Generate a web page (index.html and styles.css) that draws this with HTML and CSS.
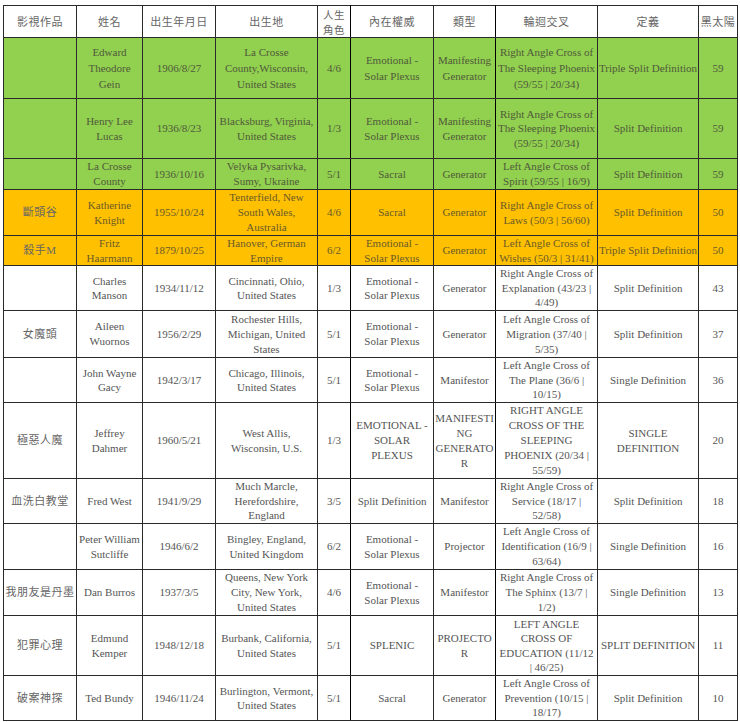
FILE: index.html
```html
<!DOCTYPE html>
<html lang="zh-Hant">
<head>
<meta charset="utf-8">
<title>連續殺人犯人類圖</title>
<link rel="stylesheet" href="styles.css">
</head>
<body>
<table class="grid">
  <colgroup>
    <col class="c1"><col class="c2"><col class="c3"><col class="c4"><col class="c5">
    <col class="c6"><col class="c7"><col class="c8"><col class="c9"><col class="c10">
  </colgroup>
  <thead>
    <tr class="h32">
      <th>影視作品</th><th>姓名</th><th>出生年月日</th><th>出生地</th><th class="two">人生<br>角色</th>
      <th>內在權威</th><th>類型</th><th>輪迴交叉</th><th>定義</th><th>黑太陽</th>
    </tr>
  </thead>
  <tbody>
    <tr class="green h61">
      <td></td><td>Edward<br>Theodore<br>Gein</td><td>1906/8/27</td><td>La Crosse<br>County,Wisconsin,<br>United States</td><td>4/6</td>
      <td>Emotional -<br>Solar Plexus</td><td>Manifesting<br>Generator</td><td>Right Angle Cross of<br>The Sleeping Phoenix<br>(59/55 | 20/34)</td><td>Triple Split Definition</td><td>59</td>
    </tr>
    <tr class="green h60">
      <td></td><td>Henry Lee<br>Lucas</td><td>1936/8/23</td><td>Blacksburg, Virginia,<br>United States</td><td>1/3</td>
      <td>Emotional -<br>Solar Plexus</td><td>Manifesting<br>Generator</td><td>Right Angle Cross of<br>The Sleeping Phoenix<br>(59/55 | 20/34)</td><td>Split Definition</td><td>59</td>
    </tr>
    <tr class="green h31">
      <td></td><td>La Crosse<br>County</td><td>1936/10/16</td><td>Velyka Pysarivka,<br>Sumy, Ukraine</td><td>5/1</td>
      <td>Sacral</td><td>Generator</td><td>Left Angle Cross of<br>Spirit (59/55 | 16/9)</td><td>Split Definition</td><td>59</td>
    </tr>
    <tr class="orange h46">
      <td class="cjk">斷頭谷</td><td>Katherine<br>Knight</td><td>1955/10/24</td><td>Tenterfield, New<br>South Wales,<br>Australia</td><td>4/6</td>
      <td>Sacral</td><td>Generator</td><td>Right Angle Cross of<br>Laws (50/3 | 56/60)</td><td>Split Definition</td><td>50</td>
    </tr>
    <tr class="orange h30">
      <td class="cjk">殺手M</td><td>Fritz<br>Haarmann</td><td>1879/10/25</td><td>Hanover, German<br>Empire</td><td>6/2</td>
      <td>Emotional -<br>Solar Plexus</td><td>Generator</td><td>Left Angle Cross of<br>Wishes (50/3 | 31/41)</td><td>Triple Split Definition</td><td>50</td>
    </tr>
    <tr class="h45">
      <td></td><td>Charles<br>Manson</td><td>1934/11/12</td><td>Cincinnati, Ohio,<br>United States</td><td>1/3</td>
      <td>Emotional -<br>Solar Plexus</td><td>Generator</td><td>Right Angle Cross of<br>Explanation (43/23 |<br>4/49)</td><td>Split Definition</td><td>43</td>
    </tr>
    <tr class="h47">
      <td class="cjk">女魔頭</td><td>Aileen<br>Wuornos</td><td>1956/2/29</td><td>Rochester Hills,<br>Michigan, United<br>States</td><td>5/1</td>
      <td>Emotional -<br>Solar Plexus</td><td>Generator</td><td>Left Angle Cross of<br>Migration (37/40 |<br>5/35)</td><td>Split Definition</td><td>37</td>
    </tr>
    <tr class="h45">
      <td></td><td>John Wayne<br>Gacy</td><td>1942/3/17</td><td>Chicago, Illinois,<br>United States</td><td>5/1</td>
      <td>Emotional -<br>Solar Plexus</td><td>Manifestor</td><td>Left Angle Cross of<br>The Plane (36/6 |<br>10/15)</td><td>Single Definition</td><td>36</td>
    </tr>
    <tr class="h76">
      <td class="cjk">極惡人魔</td><td>Jeffrey<br>Dahmer</td><td>1960/5/21</td><td>West Allis,<br>Wisconsin, U.S.</td><td>1/3</td>
      <td>EMOTIONAL -<br>SOLAR<br>PLEXUS</td><td>MANIFESTI<br>NG<br>GENERATO<br>R</td><td>RIGHT ANGLE<br>CROSS OF THE<br>SLEEPING<br>PHOENIX (20/34 |<br>55/59)</td><td>SINGLE<br>DEFINITION</td><td>20</td>
    </tr>
    <tr class="h45">
      <td class="cjk">血洗白教堂</td><td>Fred West</td><td>1941/9/29</td><td>Much Marcle,<br>Herefordshire,<br>England</td><td>3/5</td>
      <td>Split Definition</td><td>Manifestor</td><td>Right Angle Cross of<br>Service (18/17 |<br>52/58)</td><td>Split Definition</td><td>18</td>
    </tr>
    <tr class="h46">
      <td></td><td>Peter William<br>Sutcliffe</td><td>1946/6/2</td><td>Bingley, England,<br>United Kingdom</td><td>6/2</td>
      <td>Emotional -<br>Solar Plexus</td><td>Projector</td><td>Left Angle Cross of<br>Identification (16/9 |<br>63/64)</td><td>Single Definition</td><td>16</td>
    </tr>
    <tr class="h46">
      <td class="cjk">我朋友是丹墨</td><td>Dan Burros</td><td>1937/3/5</td><td>Queens, New York<br>City, New York,<br>United States</td><td>4/6</td>
      <td>Emotional -<br>Solar Plexus</td><td>Manifestor</td><td>Right Angle Cross of<br>The Sphinx (13/7 |<br>1/2)</td><td>Single Definition</td><td>13</td>
    </tr>
    <tr class="h60">
      <td class="cjk">犯罪心理</td><td>Edmund<br>Kemper</td><td>1948/12/18</td><td>Burbank, California,<br>United States</td><td>5/1</td>
      <td>SPLENIC</td><td>PROJECTO<br>R</td><td>LEFT ANGLE<br>CROSS OF<br>EDUCATION (11/12<br>| 46/25)</td><td>SPLIT DEFINITION</td><td>11</td>
    </tr>
    <tr class="h45">
      <td class="cjk">破案神探</td><td>Ted Bundy</td><td>1946/11/24</td><td>Burlington, Vermont,<br>United States</td><td>5/1</td>
      <td>Sacral</td><td>Generator</td><td>Left Angle Cross of<br>Prevention (10/15 |<br>18/17)</td><td>Split Definition</td><td>10</td>
    </tr>
  </tbody>
</table>
</body>
</html>
```

FILE: styles.css
```css
html, body {
  margin: 0;
  background: #ffffff;
}

body {
  padding: 5px 3px 0 3px;
  font-family: "Liberation Serif", "Times New Roman", "Noto Sans CJK TC", serif;
  font-size: 11px;
  line-height: 15px;
  color: #555555;
}

.grid {
  border-collapse: collapse;
  table-layout: fixed;
  width: 734px;
}

.c1 { width: 73px; }
.c2 { width: 66px; }
.c3 { width: 73px; }
.c4 { width: 102px; }
.c5 { width: 33px; }
.c6 { width: 83px; }
.c7 { width: 62px; }
.c8 { width: 102px; }
.c9 { width: 101px; }
.c10 { width: 39px; }

.grid th,
.grid td {
  border: 1px solid #2a2a2a;
  padding: 0;
  text-align: center;
  vertical-align: middle;
  white-space: nowrap;
  overflow: hidden;
}

.grid th {
  font-family: "Noto Sans CJK TC", sans-serif;
  font-weight: 400;
  font-size: 11px;
  line-height: 15px;
  color: #666666;
  letter-spacing: 0.5px;
}

.grid th.two {
  font-size: 10.5px;
  line-height: 15px;
}

.grid td.cjk {
  color: #666666;
  letter-spacing: 0.5px;
}

.grid td:nth-child(5),
.grid th:nth-child(5),
.grid td:nth-child(7),
.grid th:nth-child(7) {
  border-right-color: #000000;
}

.green td { background: #92d050; color: #4f5a3a; }
.orange td { background: #ffc000; color: #6a5a2a; }

.h30 { height: 30px; line-height: 14.5px; }
.h31 { height: 31px; }
.h32 { height: 32px; }
.h45 { height: 45px; line-height: 14.5px; }
.h46 { height: 46px; }
.h47 { height: 47px; }
.h60 { height: 60px; line-height: 14.5px; }
.h61 { height: 61px; line-height: 16px; }
.h76 { height: 76px; }
```
